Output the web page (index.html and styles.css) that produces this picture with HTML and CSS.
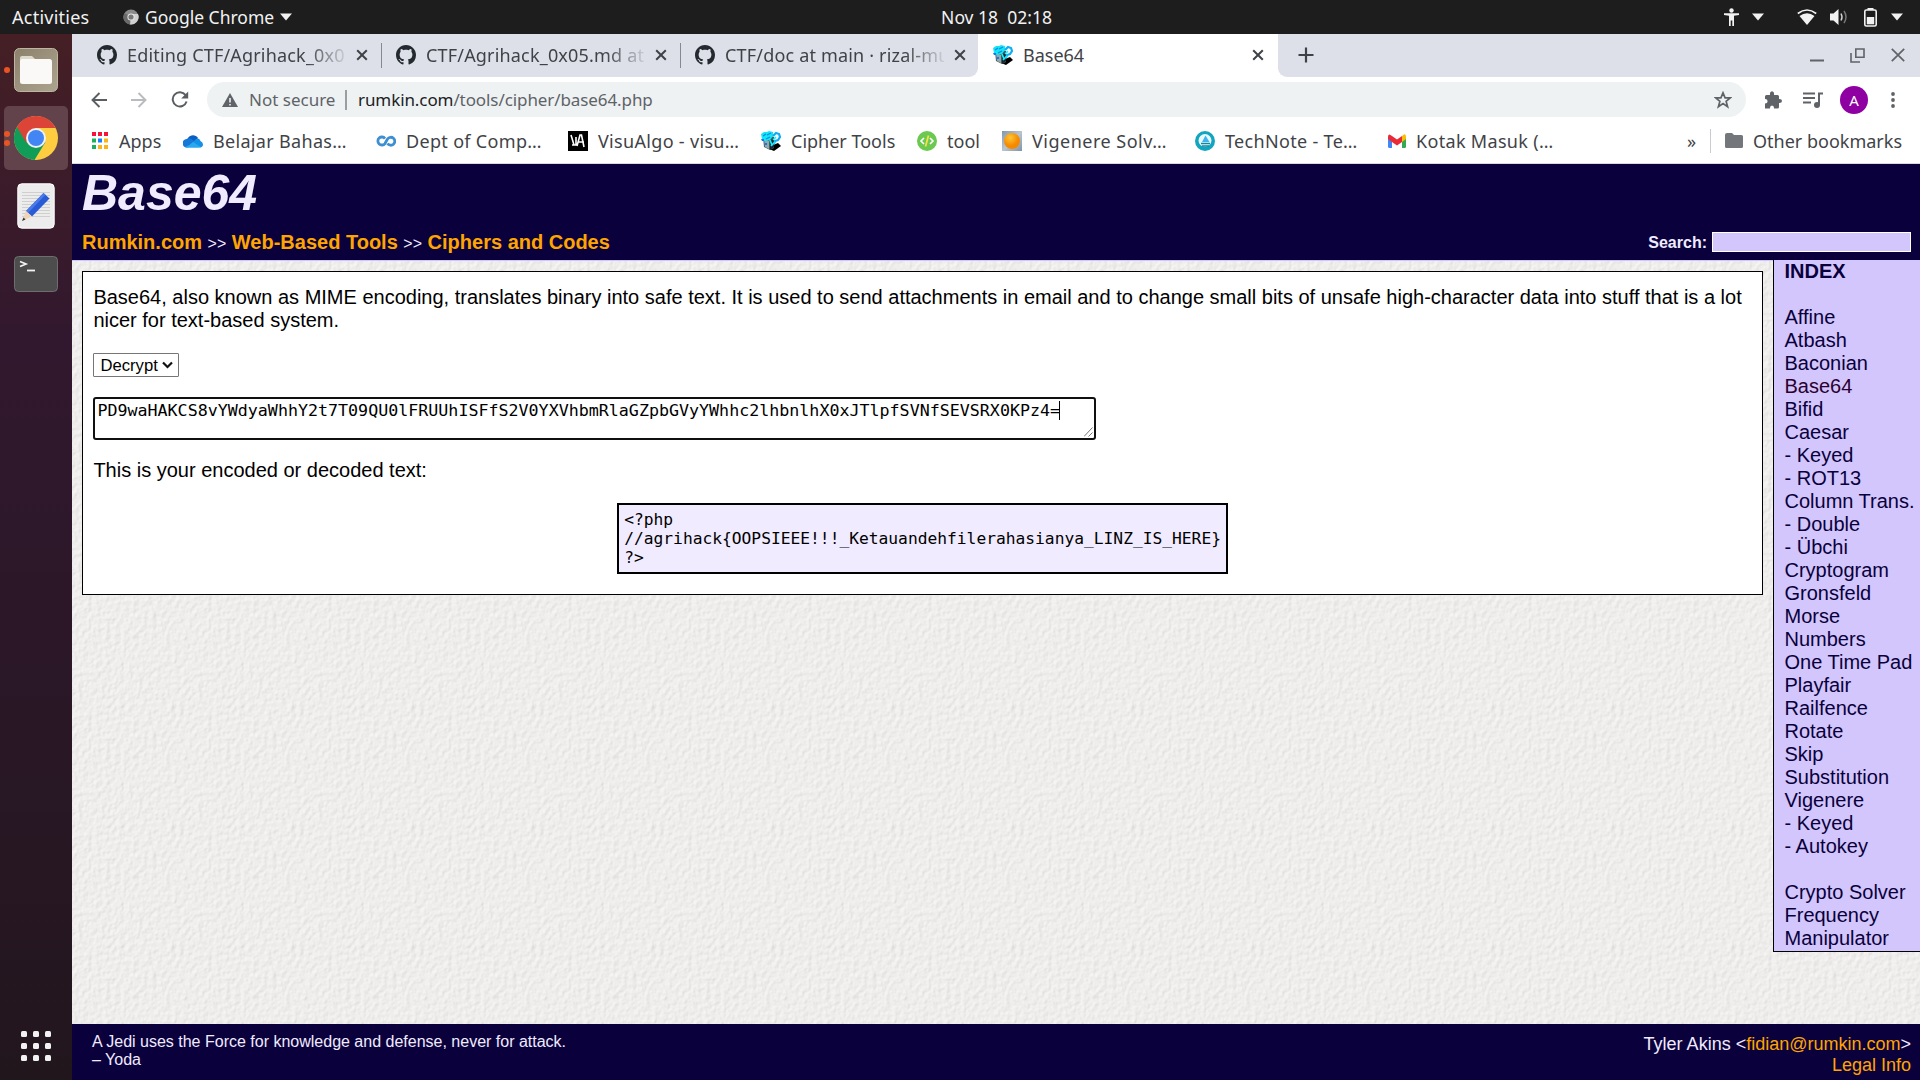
FILE: index.html
```html
<!DOCTYPE html>
<html lang="en">
<head>
<meta charset="utf-8">
<title>Base64</title>
<link rel="stylesheet" href="styles.css">
</head>
<body>
<svg class="defs" width="0" height="0">
  <symbol id="github" viewBox="0 0 16 16"><path d="M8 0C3.58 0 0 3.58 0 8c0 3.54 2.29 6.53 5.47 7.59.4.07.55-.17.55-.38 0-.19-.01-.82-.01-1.49-2.01.37-2.53-.49-2.69-.94-.09-.23-.48-.94-.82-1.13-.28-.15-.68-.52-.01-.53.63-.01 1.08.58 1.23.82.72 1.21 1.87.87 2.33.66.07-.52.28-.87.51-1.07-1.78-.2-3.64-.89-3.64-3.95 0-.87.31-1.59.82-2.15-.08-.2-.36-1.02.08-2.12 0 0 .67-.21 2.2.82.64-.18 1.32-.27 2-.27s1.36.09 2 .27c1.53-1.04 2.2-.82 2.2-.82.44 1.1.16 1.92.08 2.12.51.56.82 1.27.82 2.15 0 3.07-1.87 3.75-3.65 3.95.29.25.54.73.54 1.48 0 1.07-.01 1.93-.01 2.2 0 .21.15.46.55.38A8.01 8.01 0 0 0 16 8c0-4.42-3.58-8-8-8z" fill="#24292f"/></symbol>
  <symbol id="close" viewBox="0 0 12 12"><path d="M1.2 1.2l9.6 9.6M10.8 1.2l-9.6 9.6" stroke="#3f4347" stroke-width="2" fill="none"/></symbol>
  <symbol id="cipher" viewBox="0 0 20 20">
    <path d="M8 18l5 2 7-5-3-3-5 2z" fill="#000"/>
    <path d="M2 6l5-2 6 2v11l-4 2-6-3z" fill="#4a565c"/>
    <path d="M3 8l5 2v8l-4-2z" fill="#8fa9ad"/>
    <path d="M9 10l4-3v9l-4 3z" fill="#17262c"/>
    <path d="M0 3l3-2h3l2-1 4 1v4l-3 4-5 1-3-2z" fill="#12e6f5"/>
    <path d="M2 5l3-2M5 8l4-2M6 4l4-2" stroke="#0784ee" stroke-width="1.2"/>
    <path d="M12 5l3-3 3 1 1 3-2 3-3 1-1 3" fill="none" stroke="#0aaef5" stroke-width="2.2"/>
    <path d="M12 9l3-3M9 9l2 5M10 15l4-4" stroke="#12f0ff" stroke-width="1.7"/>
    <path d="M4 12h2v2H4zM0 8h3v2H1z" fill="#0b76ff"/>
  </symbol>
  <symbol id="down" viewBox="0 0 12 8"><path d="M0 .5h12L6 7.5z" fill="#f2f2f2"/></symbol>
</svg>

<header class="topbar">
  <span class="activities">Activities</span>
  <span class="app-menu">
    <svg width="16" height="16" viewBox="0 0 16 16"><circle cx="8" cy="8" r="7.6" fill="#8a8a8a"/><path d="M8 8L1.5 4A7.6 7.6 0 0 0 7 15.5z" fill="#6a6a6a"/><path d="M8 8L7 15.5A7.6 7.6 0 0 0 15 5H8z" fill="#d0d0d0"/><circle cx="8" cy="8" r="3.6" fill="#e8e8e8"/><circle cx="8" cy="8" r="2.6" fill="#777"/></svg>
    <span class="app-name">Google Chrome</span>
    <svg width="12" height="8"><use href="#down"/></svg>
  </span>
  <span class="clock">Nov 18&nbsp; 02:18</span>
  <span class="tray">
    <svg width="15" height="19" viewBox="0 0 15 19"><circle cx="7.5" cy="2.5" r="2.2" fill="#f2f2f2"/><path d="M0 5.3h15v1.8l-5 .7V18H8.3v-5.5H6.7V18H5V7.800L0 7.100z" fill="#f2f2f2"/></svg>
    <svg class="t-down1" width="12" height="8"><use href="#down"/></svg>
    <svg class="t-wifi" width="20" height="17" viewBox="0 0 20 17"><path d="M.8 4.500Q10-2.500 19.200 4.500" stroke="#f2f2f2" stroke-width="1.700" fill="none"/><path d="M2.500 7Q10 1.500 17.500 7L10 16z" fill="#f2f2f2"/></svg>
    <svg class="t-vol" width="18" height="16" viewBox="0 0 18 16"><path d="M0 4.500h3.500L8.500 0v16L3.500 11.500H0z" fill="#f2f2f2"/><path d="M11 4.500q2 3.500 0 7" stroke="#d0d0d0" stroke-width="1.500" fill="none"/><path d="M14 2q4 6 0 12" stroke="#777" stroke-width="1.500" fill="none"/></svg>
    <svg class="t-bat" width="13" height="19" viewBox="0 0 13 19"><path d="M3.500 0h6v2h-6z" fill="#f2f2f2"/><rect x=".8" y="2" width="11.400" height="16" rx="1.500" fill="none" stroke="#f2f2f2" stroke-width="1.600"/><path d="M2.800 9h7.400v7.300H2.800z" fill="#f2f2f2"/></svg>
    <svg class="t-down2" width="12" height="8"><use href="#down"/></svg>
  </span>
</header>

<div class="desktop">
  <nav class="dock">
    <div class="dock-item">
      <i class="dot"></i>
      <svg width="46" height="46" viewBox="0 0 46 46"><defs><linearGradient id="fg" x1="0" y1="0" x2="1" y2="1"><stop offset="0" stop-color="#8b806b"/><stop offset="1" stop-color="#ada48f"/></linearGradient></defs><rect x="1.500" y="1.500" width="43" height="43" rx="5" fill="url(#fg)" stroke="#bdb5a2"/><path d="M7 11q0-2 2-2h10l3 3v8H7z" fill="#ddd9cc"/><rect x="7" y="12" width="32" height="25" rx="2.500" fill="#faf9f8"/></svg>
    </div>
    <div class="dock-item active">
      <i class="dot"></i><i class="dot second"></i>
      <svg width="46" height="46" viewBox="0 0 46 46"><circle cx="23" cy="23" r="22" fill="#ffcd40"/><path d="M23 23L3.950 12A22 22 0 0 0 21.500 44.950L32.500 27z" fill="#0f9d58"/><path d="M3.950 12A22 22 0 0 1 42.500 13H23L13.500 28z" fill="#db4437"/><circle cx="23" cy="23" r="10" fill="#f1f1f1"/><circle cx="23" cy="23" r="8" fill="#4285f4"/></svg>
    </div>
    <div class="dock-item">
      <svg width="38" height="46" viewBox="0 0 38 46"><rect x=".8" y=".8" width="36.400" height="44.400" rx="4" fill="#ececec" stroke="#fff" stroke-width="1"/><path d="M5 9.500h28M5 12.500h28M5 15.500h28M5 18.500h28M5 21.500h28M5 24.500h28M5 27.500h28M5 30.500h28M5 33.500h28" stroke="#cfcfcf"/><path d="M26.500 10l6 5.500L15 33.500l-6-5.500z" fill="#2a5bd7"/><path d="M26.500 10l2 1.800L11 30l-2-2z" fill="#4a7be8"/><path d="M9 28l6 5.500L5 38z" fill="#f3d3b5"/><path d="M6.500 34.500l2 2L5 38z" fill="#333"/></svg>
    </div>
    <div class="dock-item">
      <svg width="46" height="38" viewBox="0 0 46 38"><rect x="1.500" y="1.500" width="43" height="35" rx="4" fill="#4d4d4d" stroke="#6e6e6e"/><path d="M7 6.500l6 2.500-6 2.500" stroke="#f4f4f4" stroke-width="1.700" fill="none"/><path d="M14 15.500h8" stroke="#f4f4f4" stroke-width="1.800"/></svg>
    </div>
    <div class="apps-grid"><i></i><i></i><i></i><i></i><i></i><i></i><i></i><i></i><i></i></div>
  </nav>

  <div class="window">
    <div class="tabs">
      <div class="tab"><svg width="20" height="20"><use href="#github"/></svg><span class="tab-title fade">Editing CTF/Agrihack_0x0</span><svg width="12" height="12"><use href="#close"/></svg></div>
      <div class="tab"><svg width="20" height="20"><use href="#github"/></svg><span class="tab-title fade">CTF/Agrihack_0x05.md at</span><svg width="12" height="12"><use href="#close"/></svg></div>
      <div class="tab last"><svg width="20" height="20"><use href="#github"/></svg><span class="tab-title fade">CTF/doc at main · rizal-mu</span><svg width="12" height="12"><use href="#close"/></svg></div>
      <div class="tab current"><svg width="20" height="20"><use href="#cipher"/></svg><span class="tab-title">Base64</span><svg width="12" height="12"><use href="#close"/></svg></div>
      <div class="strip-end">
        <svg width="16" height="16" viewBox="0 0 16 16"><path d="M8 .5v15M.5 8h15" stroke="#3f4347" stroke-width="2.200"/></svg>
        <div class="winctl">
          <svg width="14" height="14" viewBox="0 0 14 14"><path d="M0 12.500h14" stroke="#606368" stroke-width="2"/></svg>
          <svg width="15" height="15" viewBox="0 0 15 15"><path d="M5.800 1h8.200v8.200H5.800zM1 5v9h9" stroke="#606368" stroke-width="1.600" fill="none"/></svg>
          <svg width="14" height="14" viewBox="0 0 14 14"><path d="M.8.8l12.400 12.400M13.200.8L.8 13.200" stroke="#606368" stroke-width="1.700"/></svg>
        </div>
      </div>
    </div>

    <div class="toolbar">
      <svg class="nav-back" width="16" height="16" viewBox="0 0 16 16"><path d="M16 8H1.500M8.500 1L1.500 8l7 7" stroke="#5a5e63" stroke-width="1.900" fill="none"/></svg>
      <svg class="nav-fwd" width="16" height="16" viewBox="0 0 16 16"><path d="M0 8h14.500M7.500 1l7 7-7 7" stroke="#b9bbbe" stroke-width="1.900" fill="none"/></svg>
      <svg class="nav-reload" width="18" height="17" viewBox="0 0 18 17"><path d="M14.600 4.200A7.100 7.100 0 1 0 15.600 10.500" stroke="#5a5e63" stroke-width="2" fill="none"/><path d="M17.200.5v7h-7z" fill="#5a5e63"/></svg>
      <div class="omnibox">
        <svg width="16" height="14" viewBox="0 0 16 14"><path d="M8 0l8 14H0z" fill="#606468"/><path d="M8 5v4.500M8 11v1.600" stroke="#eef2f3" stroke-width="1.600"/></svg>
        <span class="insecure">Not secure</span>
        <i class="obar"></i>
        <span class="url"><b>rumkin.com</b>/tools/cipher/base64.php</span>
        <svg class="star" width="18" height="18" viewBox="0 0 18 18"><path d="M9 1.800l2.100 5h5.200l-4.200 3.500 1.500 5.400L9 12.600l-4.600 3.100 1.500-5.400L1.700 6.800h5.200z" fill="none" stroke="#5f6368" stroke-width="1.700"/></svg>
      </div>
      <svg class="ext" width="18" height="18" viewBox="0 0 18 18"><path d="M1 5.500q0-1.500 1.500-1.500H6Q5.500.3 8 .3T10 4h3.500Q15 4 15 5.500V8q3-.2 3 2t-3 2v4q0 1.500-1.500 1.500H10q.2-3-2-3t-2 3H1V12.500q2.600 0 2.600-2.300T1 8z" fill="#5f6368"/></svg>
      <svg class="music" width="20" height="16" viewBox="0 0 20 16"><path d="M0 1.500h12M0 6h12M0 10.500h8" stroke="#5f6368" stroke-width="2"/><path d="M16 13V1.500h4" stroke="#5f6368" stroke-width="2" fill="none"/><circle cx="14" cy="13" r="3" fill="#5f6368"/></svg>
      <span class="avatar">A</span>
      <svg class="kebab" width="4" height="16" viewBox="0 0 4 16"><circle cx="2" cy="2" r="1.900" fill="#5f6368"/><circle cx="2" cy="8" r="1.900" fill="#5f6368"/><circle cx="2" cy="14" r="1.900" fill="#5f6368"/></svg>
    </div>

    <div class="bookmarks">
      <div class="bm apps"><svg width="16" height="17" viewBox="0 0 16 17"><path d="M0 0h4v4H0zM6 0h4v4H6zM12 0h4v4h-4z" fill="#f5133b"/><path d="M0 6.500h4v4H0z" fill="#1cb05c"/><path d="M6 6.500h4v4H6z" fill="#1482fa"/><path d="M12 6.500h4v4h-4zM6 13h4v4H6zM12 13h4v4h-4z" fill="#fcb316"/><path d="M0 13h4v4H0z" fill="#1cb05c"/></svg><span>Apps</span></div>
      <div class="bm cut"><svg width="20" height="14" viewBox="0 0 20 14"><path d="M5 4A6 6 0 0 1 15 4l-5 6-8-1z" fill="#0a5fc0"/><path d="M4 13.500A4 4 0 0 1 3.500 5Q7 3 10 6l4 5z" fill="#1577d6"/><path d="M13 5Q16 3.500 17.500 7 20 8 20 10.500T17 13.500L9 9z" fill="#1590e8"/><path d="M2 13q4-1 8-5l8 5q-1 .8-2.500.8H4Q3 13.800 2 13z" fill="#27a8f0"/></svg><span>Belajar Bahas…</span></div>
      <div class="bm cut"><svg width="20" height="12" viewBox="0 0 20 12"><path d="M9 3.500A4 4 0 1 0 9 8.500L11.500 4A4 4 0 1 1 11.500 8.500" fill="none" stroke="#3d8fd1" stroke-width="2.800"/></svg><span>Dept of Comp…</span></div>
      <div class="bm cut"><svg width="20" height="20" viewBox="0 0 20 20"><path d="M0 0h20v20H0z" fill="#000"/><path d="M3 4l3 10h2V6M9 15l3-11h1.500L16 16M10 11h6M4 14h5" fill="none" stroke="#fff" stroke-width="1.600"/></svg><span>VisuAlgo - visu…</span></div>
      <div class="bm"><svg width="20" height="20"><use href="#cipher"/></svg><span>Cipher Tools</span></div>
      <div class="bm"><svg width="20" height="20" viewBox="0 0 20 20"><circle cx="10" cy="10" r="10" fill="#6cc950"/><path d="M7 7l-3 3 3 3M13 7l3 3-3 3" stroke="#fff" stroke-width="1.600" fill="none"/><path d="M11.500 4.500l-3 11" stroke="#f7e04a" stroke-width="1.800"/></svg><span>tool</span></div>
      <div class="bm cut wide"><svg width="20" height="20" viewBox="0 0 20 20"><defs><radialGradient id="og" cx=".4" cy=".3"><stop offset="0" stop-color="#ffc535"/><stop offset="1" stop-color="#f58a00"/></radialGradient><linearGradient id="sg" x1="0" y1="0" x2="1" y2="1"><stop offset="0" stop-color="#8297aa"/><stop offset=".5" stop-color="#b9c5cf"/><stop offset="1" stop-color="#8093a5"/></linearGradient></defs><path d="M0 0h20v20H0z" fill="url(#sg)"/><circle cx="10" cy="10" r="8" fill="url(#og)"/></svg><span>Vigenere Solv…</span></div>
      <div class="bm cut"><svg width="20" height="20" viewBox="0 0 20 20"><circle cx="10" cy="10" r="10" fill="#12a5c0"/><circle cx="10" cy="9.500" r="6.500" fill="#e9f8fb"/><path d="M10.500 4.500l4 6.500H7z" fill="#3db4ee"/><path d="M6 12.500h9M7 15h7" stroke="#12869c" stroke-width="1.300"/></svg><span>TechNote - Te…</span></div>
      <div class="bm cut"><svg width="18" height="14" viewBox="0 0 18 14"><path d="M0 3h4v11H1.500Q0 14 0 12.500z" fill="#4285f4"/><path d="M14 3h4v9.500q0 1.500-1.500 1.500H14z" fill="#34a853"/><path d="M14 2q4-4 4 1v2l-4 3z" fill="#fbbc04"/><path d="M4 8L0 5V3Q0-1.500 4 2l5 3.500L14 2v6l-5 3.500z" fill="#ea2a35"/></svg><span>Kotak Masuk (…</span></div>
      <div class="more">»</div>
      <div class="bm other"><svg width="18" height="15" viewBox="0 0 18 15"><path d="M0 2Q0 0 2 0h5l2 2h7.500Q18 2 18 3.500v10Q18 15 16.500 15h-15Q0 15 0 13.500z" fill="#73777b"/></svg><span>Other bookmarks</span></div>
    </div>

    <div class="page">
      <div class="masthead">
        <h1>Base64</h1>
        <div class="crumbs"><span class="trail"><a>Rumkin.com</a> <small>&gt;&gt;</small> <a>Web-Based Tools</a> <small>&gt;&gt;</small> <a>Ciphers and Codes</a></span>
          <label class="search">Search: <input type="text"></label></div>
      </div>
      <div class="main">
        <div class="content">
          <p>Base64, also known as MIME encoding, translates binary into safe text. It is used to send attachments in email and to change small bits of unsafe high-character data into stuff that is a lot nicer for text-based system.</p>
          <div class="select">Decrypt<svg width="11" height="8" viewBox="0 0 11 8"><path d="M1 1.500l4.500 4.500L10 1.500" stroke="#111" stroke-width="2.200" fill="none"/></svg></div>
          <div class="textarea">PD9waHAKCS8vYWdyaWhhY2t7T09QU0lFRUUhISFfS2V0YXVhbmRlaGZpbGVyYWhhc2lhbnlhX0xJTlpfSVNfSEVSRX0KPz4=<i class="caret"></i><svg class="grip" width="9" height="10" viewBox="0 0 9 10"><path d="M0 9.500L8.500.5M4.500 9.500l4-4" stroke="#666" stroke-width=".9"/></svg></div>
          <p class="label">This is your encoded or decoded text:</p>
          <pre class="result">&lt;?php
//agrihack{OOPSIEEE!!!_Ketauandehfilerahasianya_LINZ_IS_HERE}
?&gt;</pre>
        </div>
        <div class="index"><b>INDEX</b>

Affine
Atbash
Baconian
<span class="here">Base64</span>
Bifid
Caesar
- Keyed
- ROT13
Column Trans.
- Double
- Übchi
Cryptogram
Gronsfeld
Morse
Numbers
One Time Pad
Playfair
Railfence
Rotate
Skip
Substitution
Vigenere
- Keyed
- Autokey

Crypto Solver
Frequency
Manipulator</div>
      </div>
      <div class="footer">
        <div class="quote">A Jedi uses the Force for knowledge and defense, never for attack.<br>– Yoda</div>
        <div class="contact">Tyler Akins &lt;<a>fidian@rumkin.com</a>&gt;<br><a>Legal Info</a></div>
      </div>
    </div>
  </div>
</div>
</body>
</html>
```
FILE: styles.css
```css
* { box-sizing: border-box; }
body {
  margin: 0;
  width: 1920px;
  height: 1080px;
  overflow: hidden;
  display: flex;
  flex-direction: column;
  font-family: "Noto Sans", "Open Sans", sans-serif;
  font-size: 18px;
  color: #3f4347;
}
svg { display: block; flex: none; }
.defs { position: absolute; }

/* desktop panel */
.topbar {
  height: 34px;
  background: #1d1d1d;
  color: #f2f2f2;
  display: grid;
  grid-template-columns: 1fr auto 1fr;
  grid-template-areas: "left clock tray";
  align-items: center;
  padding: 0 17px 0 12px;
  font-size: 17.5px;
}
.activities, .app-menu { grid-area: left; }
.activities { font-size: 18px; letter-spacing: .25px; }
.app-menu { margin-left: 111px; display: flex; align-items: center; gap: 6px; }
.clock { grid-area: clock; margin-left: 78px; }
.tray { grid-area: tray; display: flex; align-items: center; justify-content: flex-end; }
.t-down1 { margin-left: 13px; }
.t-wifi { margin-left: 33px; }
.t-vol { margin-left: 13px; }
.t-bat { margin-left: 16px; }
.t-down2 { margin-left: 14px; }

.desktop { flex: 1; display: flex; min-height: 0; }

/* dock */
.dock {
  width: 72px;
  background: linear-gradient(#451f25 0, #32182e 300px, #2b1728 600px, #22161d 100%);
  display: flex;
  flex-direction: column;
  align-items: center;
  padding: 4px 0 19px;
  gap: 4px;
}
.dock-item {
  width: 64px;
  height: 64px;
  border-radius: 5px;
  display: flex;
  align-items: center;
  justify-content: center;
  position: relative;
}
.dock-item.active { background: #62434b; }
.dot { position: absolute; left: 0; top: 29px; width: 6px; height: 6px; border-radius: 50%; background: #e95420; }
.active .dot { top: 25px; }
.active .dot.second { top: 34px; }
.apps-grid { margin-top: auto; display: grid; grid-template-columns: repeat(3, 6px); gap: 6px; }
.apps-grid i { width: 6px; height: 6px; border-radius: 1.5px; background: #f2f2f2; }

/* browser */
.window { flex: 1; display: flex; flex-direction: column; background: #fff; min-width: 0; }
.tabs { height: 43px; background: #fff; display: flex; }
.tab { width: 299px; background: #dde0e8; display: flex; align-items: center; padding: 0 14px 2px 14px; position: relative; }
.tab:first-child { width: 310px; padding-left: 25px; }
.tab:not(.last):not(.current)::after { content: ""; position: absolute; right: 0; top: 9px; width: 1px; height: 25px; background: #85888d; }
.tab.last { width: 297px; padding-right: 12px; border-radius: 0 0 9px 0; }
.tab.current { width: 300px; background: #fff; border-radius: 9px 9px 0 0; padding-left: 15px; }
.tab-title { flex: 1; margin: 0 10px; white-space: nowrap; overflow: hidden; }
.fade { letter-spacing: .18px; -webkit-mask-image: linear-gradient(90deg, #000 82%, rgba(0,0,0,.1)); mask-image: linear-gradient(90deg, #000 82%, rgba(0,0,0,.1)); }
.strip-end { flex: 1; background: #dde0e8; border-radius: 0 0 0 9px; display: flex; align-items: center; justify-content: space-between; padding: 0 15px 1px 20px; }
.winctl { display: flex; gap: 26px; }

.toolbar { height: 46px; padding: 5px 25px 6px 19px; display: flex; align-items: center; }
.nav-fwd { margin-left: 24px; }
.nav-reload { margin-left: 24px; }
.omnibox { margin-left: 18px; width: 1539px; height: 35px; border-radius: 18px; background: #eef2f3; display: flex; align-items: center; padding: 0 14px 0 15px; font-size: 17px; }
.insecure { margin-left: 11px; color: #5f6368; width: 87px; white-space: nowrap; }
.obar { width: 2px; height: 20px; background: #9a9da1; margin: 0 11px 0 9px; }
.url { color: #5f6368; letter-spacing: -.09px; }
.url b { font-weight: normal; color: #202124; }
.star { margin-left: auto; }
.ext { margin-left: 18px; }
.music { margin-left: 21px; }
.avatar { margin-left: 17px; width: 28px; height: 28px; border-radius: 50%; background: #8e00a1; color: #fff; font-size: 15px; line-height: 28px; text-align: center; }
.kebab { margin-left: auto; }

.bookmarks {
  height: 41px;
  border-bottom: 1px solid #d8dade;
  padding: 0 0 5px 20px;
  display: grid;
  grid-template-columns: 91px 193px 192px 193px 156px 85px 193px 193px 299px 23px 1fr;
  align-items: center;
}
.bm { display: flex; align-items: center; gap: 10px; white-space: nowrap; }
.bm.apps { gap: 11px; }
.bm.cut { letter-spacing: .32px; }
.bm.wide { letter-spacing: .5px; }
.other { border-left: 1px solid #c9cccf; height: 24px; padding-left: 14px; }

/* site */
.page { flex: 1; display: flex; flex-direction: column; font-family: "Liberation Sans", Arial, sans-serif; font-size: 20px; line-height: 23px; color: #000; min-height: 0; }
.masthead { height: 97px; background: #0a003b; border-bottom: 1px solid #d2c6fc; color: #f0ebff; padding: 0 9px 0 10px; }
h1 { margin: 0; font-size: 50px; line-height: 58px; font-style: italic; }
.crumbs { display: flex; justify-content: space-between; align-items: center; margin-top: 9px; font-size: 16px; }
.trail { font-size: 20px; line-height: 23px; }
.trail small { font-size: 16px; line-height: 1; }
.trail a { font-weight: bold; }
a { color: #ffa500; }
.search { font-weight: bold; display: flex; align-items: center; gap: 5px; margin-top: -1px; }
.search input { width: 199px; height: 20px; margin: 0; border: 1px solid #fff; background: #d2c6fc; }

.main {
  flex: 1;
  display: flex;
  align-items: flex-start;
  background-color: #efeeec;
  background-image: url("data:image/svg+xml,%3Csvg xmlns='http://www.w3.org/2000/svg' width='120' height='120'%3E%3Cfilter id='n' x='0' y='0' width='100%25' height='100%25' color-interpolation-filters='sRGB'%3E%3CfeTurbulence type='fractalNoise' baseFrequency='.22 .18' numOctaves='3' seed='4' stitchTiles='stitch' result='t'/%3E%3CfeDiffuseLighting in='t' surfaceScale='.5' lighting-color='%23f7f6f4'%3E%3CfeDistantLight azimuth='225' elevation='75'/%3E%3C/feDiffuseLighting%3E%3C/filter%3E%3Crect width='120' height='120' filter='url(%23n)'/%3E%3C/svg%3E");
}
.content { width: 1681px; height: 324px; margin: 10px 0 0 10px; background: #fff; border: 1px solid #000; padding: 14px 10px 0 10.4px; }
p { margin: 0 0 21px; }
.select { width: 86px; height: 24px; border: 1px solid #767676; border-radius: 1px; padding: 0 5px 0 6px; display: flex; align-items: center; justify-content: space-between; font-size: 16.67px; }
.textarea { position: relative; width: 1003px; height: 43px; margin: 20px 0 19px; border: 2px solid #101010; border-radius: 3px; padding: 2px; font: 16.67px/19px "DejaVu Sans Mono", monospace; white-space: nowrap; }
.caret { display: inline-block; width: 1px; height: 19px; background: #000; vertical-align: top; margin-left: -1px; }
.grip { position: absolute; right: 1px; bottom: 1px; }
.result { width: 611px; margin: 0 auto; border: 2px solid #000; background: #f0ebff; padding: 5px; font: 16.25px/19px "DejaVu Sans Mono", monospace; height: 71px; }
.index { margin: -1px 0 0 10px; flex: 1; height: 692px; background: #d2c6fc; border: solid #000; border-width: 0 0 1px 1px; padding-left: 10.5px; white-space: pre; color: #0a003b; }
.here { color: #2b0030; }

.footer { height: 56px; background: #0a003b; color: #f0ebff; display: flex; justify-content: space-between; padding: 9px 9px 0 20px; font-size: 16px; line-height: 18px; }
.contact { text-align: right; font-size: 18px; line-height: 21px; margin-top: 1px; }
```
